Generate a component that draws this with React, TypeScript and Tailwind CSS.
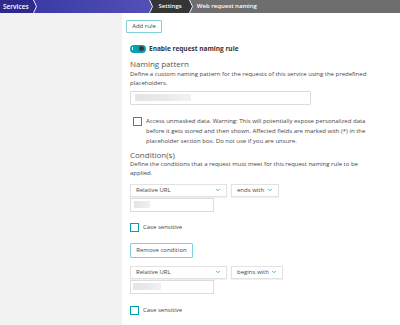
import { ChevronDown } from "lucide-react";

const Sep = ({ from, to }: { from: string; to: string }) => (
  <svg width="6" height="13" viewBox="0 0 6 13" className="shrink-0 block">
    <rect width="6" height="13" fill={to} />
    <polygon points="0,0 2.5,0 5.5,6.5 2.5,13 0,13" fill={from} />
    <polyline points="2.5,0 5.5,6.5 2.5,13" fill="none" stroke="#fff" strokeWidth="0.9" />
  </svg>
);

const Select = ({ label, width }: { label: string; width: string }) => (
  <div className={`${width} h-[13px] flex items-center justify-between px-[5px] border border-[#e2e2e2] shadow-[0_1px_1px_rgba(0,0,0,0.06)] bg-white text-[6px] text-[#454646]`}>
    <span>{label}</span>
    <ChevronDown size={6} strokeWidth={3} className="text-[#00a1b2]" />
  </div>
);

const Redacted = ({ width }: { width: string }) => (
  <div className={`${width} h-[7px] bg-gradient-to-r from-[#e4e4e4] via-[#e9e9e9] to-[#f2f2f2] blur-[0.6px]`} />
);

const Checkbox = () => (
  <span className="w-[9px] h-[9px] shrink-0 border border-[#00a1b2] bg-white block" />
);

const App = () => {
  return (
    <div className="w-[400px] h-[325px] overflow-hidden bg-white flex flex-col font-['Open_Sans',sans-serif] text-[#454646]">
      {/* Breadcrumb */}
      <div className="h-[13px] flex items-stretch text-[6px] text-white shrink-0">
        <div className="bg-[#2e2a8c] flex items-center pl-[3px] pr-[2px] text-[6.5px] font-semibold">Services</div>
        <Sep from="#2e2a8c" to="#3c3aa6" />
        <div className="w-[110px] bg-gradient-to-r from-[#3c3aa6] to-[#5250b5]" />
        <Sep from="#5250b5" to="#353535" />
        <div className="bg-[#353535] flex items-center pl-[6px] pr-[5px] font-semibold">Settings</div>
        <Sep from="#353535" to="#6e6e6e" />
        <div className="flex-1 bg-[#6e6e6e] flex items-center pl-[4px] font-semibold">Web request naming</div>
      </div>

      <div className="flex flex-1">
        {/* Sidebar */}
        <div className="w-[122px] shrink-0 bg-[#f2f2f2]" />

        {/* Main */}
        <div className="flex-1 pl-[8px] pt-[7px] flex flex-col">
          <button className="-ml-[4px] w-[36px] h-[13px] border border-[#7fd0d8] rounded-[1px] text-[6px] text-[#454646] flex items-center justify-center">
            Add rule
          </button>

          <div className="flex items-center gap-[3px] mt-[11px]">
            <div className="w-[16px] h-[8px] rounded-full bg-[#00a1b2] flex items-center justify-between px-[2px]">
              <span className="w-[1px] h-[3px] bg-white" />
              <span className="w-[5px] h-[5px] rounded-full bg-[#3a3a3a]" />
            </div>
            <span className="text-[6.5px] font-bold text-[#353535]">Enable request naming rule</span>
          </div>

          <div className="mt-[5px] text-[8px] leading-[10px] text-[#555]">Naming pattern</div>
          <div className="mt-[1px] text-[6px] leading-[9.5px] w-[240px] text-[#454646]">
            Define a custom naming pattern for the requests of this service using the predefined placeholders.
          </div>
          <div className="mt-[2px] w-[181px] h-[14px] border border-[#dcdcdc] rounded-[1px] flex items-center px-[4px]">
            <Redacted width="w-[56px]" />
          </div>

          <div className="mt-[12px] flex gap-[4px] pl-[3px]">
            <Checkbox />
            <div className="text-[6px] leading-[10px] -mt-[1px] w-[220px]">
              Access unmasked data. Warning: This will potentially expose personalized data before it gets stored and then shown. Affected fields are marked with (*) in the placeholder section box. Do not use if you are unsure.
            </div>
          </div>

          <div className="mt-[4px] text-[8px] leading-[10px] text-[#555]">Condition(s)</div>
          <div className="text-[6px] leading-[9.5px] w-[240px]">
            Define the conditions that a request must meet for this request naming rule to be applied.
          </div>

          <div className="mt-[5px] flex gap-[4px]">
            <Select label="Relative URL" width="w-[97px]" />
            <Select label="ends with" width="w-[48px]" />
          </div>
          <div className="mt-[1px] w-[84px] h-[14px] border border-[#dcdcdc] flex items-center px-[3px]">
            <Redacted width="w-[16px]" />
          </div>

          <div className="mt-[11px] flex items-center gap-[4px]">
            <Checkbox />
            <span className="text-[6px]">Case sensitive</span>
          </div>

          <button className="mt-[11px] w-[63px] h-[15px] border border-[#7fd0d8] rounded-[1px] text-[6px] text-[#454646] flex items-center justify-center">
            Remove condition
          </button>

          <div className="mt-[8px] flex gap-[4px]">
            <Select label="Relative URL" width="w-[97px]" />
            <Select label="begins with" width="w-[52px]" />
          </div>
          <div className="mt-[1px] w-[84px] h-[14px] border border-[#dcdcdc] flex items-center px-[2px]">
            <Redacted width="w-[28px]" />
          </div>

          <div className="mt-[12px] flex items-center gap-[4px]">
            <Checkbox />
            <span className="text-[6px]">Case sensitive</span>
          </div>

          <div className="mt-[10px] w-[63px] h-[15px] border border-[#7fd0d8] rounded-[1px]" />
        </div>
      </div>
    </div>
  );
};

export default App;
